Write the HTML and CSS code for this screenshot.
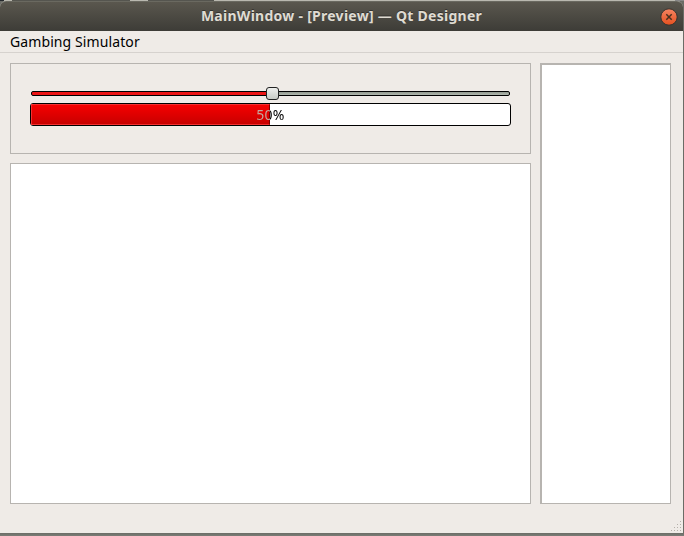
FILE: index.html
```html
<!DOCTYPE html>
<html lang="en">
<head>
<meta charset="utf-8">
<title>MainWindow - [Preview] — Qt Designer</title>
<link rel="stylesheet" href="styles.css">
</head>
<body>
<div class="backdrop"></div>
<div class="window">
  <header class="titlebar">
    <span class="title">MainWindow - [Preview] — Qt Designer</span>
    <button class="close" aria-label="Close">
      <svg width="18" height="18" viewBox="0 0 18 18">
        <defs><linearGradient id="c" x2="0" y2="1"><stop offset="0" stop-color="#f58462"/><stop offset="1" stop-color="#e4501f"/></linearGradient></defs>
        <circle cx="9" cy="9" r="8.2" fill="url(#c)" stroke="#34332e" stroke-width="1"/>
        <path d="M6.3 6.3l5.4 5.4m0-5.4l-5.4 5.4" stroke="#49301f" stroke-width="1.5"/>
      </svg>
    </button>
  </header>
  <nav class="menubar"><span class="menu">Gambing Simulator</span></nav>
  <main class="content">
    <section class="controls">
      <div class="slider"><div class="handle"></div></div>
      <div class="progress">
        <div class="fill"></div>
        <span class="percent">50%</span>
      </div>
    </section>
    <section class="view"></section>
    <aside class="side"></aside>
  </main>
  <footer class="status">
    <svg class="grip" width="12" height="12" viewBox="0 0 12 12">
      <path fill="#b5b1ab" d="M9 0h1v1h-1zM6 3h1v1h-1zM9 3h1v1h-1zM3 6h1v1h-1zM6 6h1v1h-1zM9 6h1v1h-1zM0 9h1v1h-1zM3 9h1v1h-1zM6 9h1v1h-1zM9 9h1v1h-1z"/>
    </svg>
  </footer>
</div>
</body>
</html>
```
FILE: styles.css
```css
* { box-sizing: border-box; }
body {
  margin: 0;
  width: 684px;
  height: 536px;
  overflow: hidden;
  background: linear-gradient(#6b6c66 533px, #7b7d77 536px);
  font: 14px/20px "Noto Sans", "Open Sans", sans-serif;
  color: #1a1a1a;
}
.backdrop {
  height: 1px;
  background: linear-gradient(90deg, #24282c 4px, #b9b8af 4px 12px, #55554f 12px 130px, #b9b8af 130px 148px, #55554f 148px 214px, #b9b8af 214px 675px, #888 675px);
}
.window {
  width: 683px;
  height: 532px;
  display: flex;
  flex-direction: column;
  background: #efebe7;
  border-radius: 6px 6px 0 0;
}
.titlebar {
  height: 30px;
  display: grid;
  grid-template-columns: 1fr 18px;
  align-items: center;
  padding: 0 5px 0 23px;
  border-top: 1px solid #6a6960;
  border-radius: 6px 6px 0 0;
  background: linear-gradient(#5a574e, #3d3c37);
}
.title {
  justify-self: center;
  padding-bottom: 2px;
  font-weight: 700;
  font-size: 14px;
  letter-spacing: 0.27px;
  color: #dfdbd2;
  text-shadow: 0 -1px #33322e;
  white-space: nowrap;
}
.close { padding: 0; border: 0; background: none; height: 18px; display: block; }
.close svg { display: block; }
.menubar {
  height: 22px;
  padding: 1px 10px 0;
  border-bottom: 1px solid #d6d2ce;
}
.menu { display: block; color: #000; letter-spacing: 0.1px; }
.content {
  flex: 1;
  display: grid;
  grid-template-columns: 521px 131px;
  grid-template-rows: 91px 341px;
  gap: 9px;
  padding: 10px 10px 0;
}
.controls, .view, .side { border: 1px solid #b7b4b0; }
.controls { padding: 27px 19px 0; }
.view, .side { background: #fff; }
.side { grid-column: 2; grid-row: 1 / 3; border-width: 2px 1px 1px 2px; }
.slider {
  height: 5px;
  margin: 0 1px 7px;
  border: 1px solid #000;
  border-radius: 2px;
  background: linear-gradient(90deg, #ed1515 240px, transparent 240px), linear-gradient(#929a90, #b1b7ae);
}
.handle {
  position: relative;
  left: 234px;
  top: -5px;
  width: 13px;
  height: 13px;
  border: 1px solid #222;
  border-radius: 3px;
  background: linear-gradient(#eeefed, #c7cbc5);
}
.progress {
  height: 23px;
  display: grid;
  border: 1px solid #000;
  border-radius: 3px;
  background: #fff;
}
.fill {
  grid-area: 1 / 1;
  width: 239px;
  border: 1px solid #f33030;
  border-right: 1px solid #790000;
  border-radius: 1px 0 0 1px;
  background: linear-gradient(#f50000, #c90000);
}
.percent {
  grid-area: 1 / 1;
  justify-self: center;
  align-self: center;
  font-size: 14px;
  letter-spacing: 0.3px;
  background: linear-gradient(90deg, #c3aaa1 14.5px, #000 14.5px);
  background-clip: text;
  -webkit-background-clip: text;
  color: transparent;
}
.status { height: 16px; display: flex; justify-content: flex-end; align-items: flex-end; padding: 0; }
.grip { display: block; }
```
